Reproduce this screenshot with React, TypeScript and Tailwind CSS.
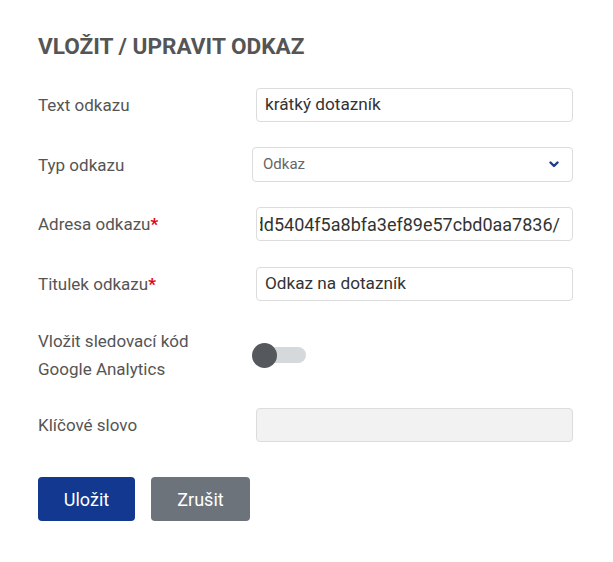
import React from "react";

const font = { fontFamily: "Roboto, 'Liberation Sans', sans-serif" };

const Label = ({ children, required }: { children: React.ReactNode; required?: boolean }) => (
  <div className="w-[214px] shrink-0 text-[17px] leading-[28px] text-[#555]">
    {children}
    {required && <span className="text-[#e3000f] font-bold">*</span>}
  </div>
);

const Input = ({ value }: { value: string }) => (
  <div className="ml-[4px] flex h-[34px] w-[317px] items-center overflow-hidden whitespace-nowrap rounded-[4px] border border-[#dcdcdc] bg-white px-[8px] text-[17.2px] text-[#333]">
    {value}
  </div>
);

export default function App() {
  return (
    <div className="min-h-[562px] bg-white pl-[38px] pt-[32px]" style={font}>
      <h1 className="text-[22.6px] font-bold leading-[30px] text-[#555]">VLOŽIT / UPRAVIT ODKAZ</h1>

      {/* Text odkazu */}
      <div className="mt-[26px] flex items-center">
        <Label>Text odkazu</Label>
        <Input value="krátký dotazník" />
      </div>

      {/* Typ odkazu */}
      <div className="mt-[25px] flex items-center">
        <Label>Typ odkazu</Label>
        <div className="flex h-[35px] w-[321px] items-center justify-between rounded-[4px] border border-[#dcdcdc] bg-white pl-[10px] pr-[13px] text-[15px] text-[#666]">
          <span>Odkaz</span>
          <svg width="10" height="7" viewBox="0 0 10 7">
            <polyline points="1.5,1.5 5,5 8.5,1.5" fill="none" stroke="#1f3d8f" strokeWidth="2.4" strokeLinecap="round" strokeLinejoin="round" />
          </svg>
        </div>
      </div>

      {/* Adresa odkazu: scrolled to the end, start is clipped */}
      <div className="mt-[25px] flex items-center">
        <Label required>Adresa odkazu</Label>
        <div className="ml-[4px] flex h-[34px] w-[317px] items-center justify-end overflow-hidden whitespace-nowrap rounded-[4px] border border-[#dcdcdc] bg-white pl-[3px] pr-[12px] text-[18px] text-[#333]">
          <div className="min-w-0 flex-1 overflow-hidden">
            <div className="flex justify-end">
              <span className="shrink-0">https://www.survio.com/survey/d/3dd5404f5a8bfa3ef89e57cbd0aa7836/</span>
            </div>
          </div>
        </div>
      </div>

      {/* Titulek odkazu */}
      <div className="mt-[26px] flex items-center">
        <Label required>Titulek odkazu</Label>
        <Input value="Odkaz na dotazník" />
      </div>

      {/* Google Analytics */}
      <div className="mt-[26px] flex items-center">
        <Label>
          Vložit sledovací kód
          <br />
          Google Analytics
        </Label>
        <div className="relative h-[25px] w-[54px]">
          <div className="absolute left-[12px] top-[4px] h-[16px] w-[42px] rounded-full bg-[#d6d9dc]" />
          <div className="absolute left-0 top-0 h-[25px] w-[25px] rounded-full bg-[#55585c]" />
        </div>
      </div>

      {/* Klíčové slovo */}
      <div className="mt-[25px] flex items-center">
        <Label>Klíčové slovo</Label>
        <div className="ml-[4px] h-[34px] w-[317px] rounded-[4px] border border-[#dcdcdc] bg-[#f2f2f2]" />
      </div>

      <div className="mt-[35px] flex gap-[16px]">
        <button className="h-[44px] w-[97px] rounded-[4px] bg-[#12388f] text-[18px] text-white">Uložit</button>
        <button className="h-[44px] w-[99px] rounded-[4px] bg-[#6c737b] text-[18px] text-white">Zrušit</button>
      </div>
    </div>
  );
}
